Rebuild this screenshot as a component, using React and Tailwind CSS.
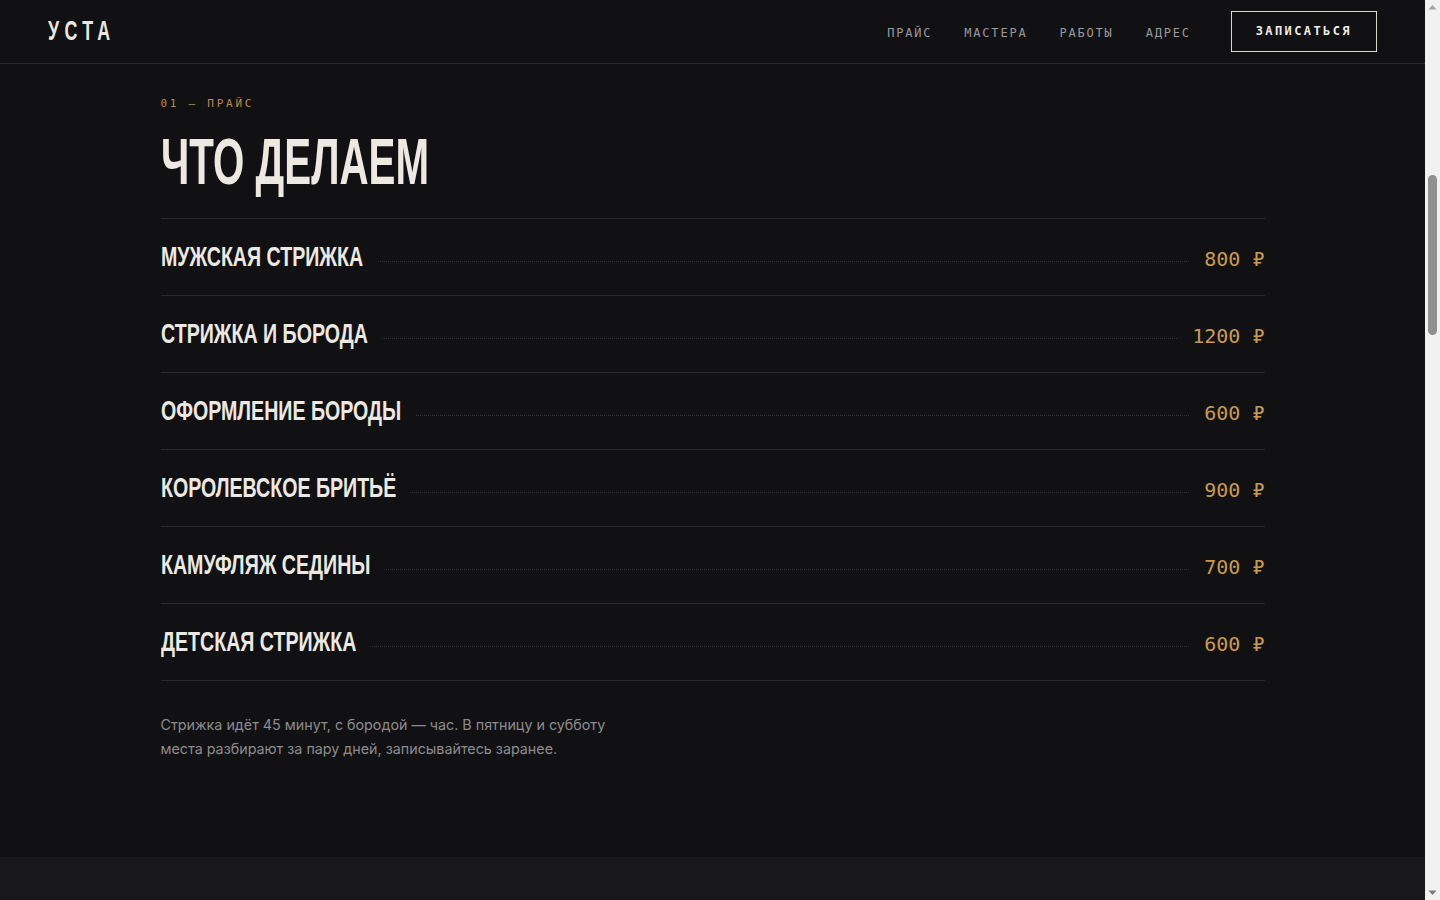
import React from "react";

const services = [
  { name: "Мужская стрижка", price: "800" },
  { name: "Стрижка и борода", price: "1200" },
  { name: "Оформление бороды", price: "600" },
  { name: "Королевское бритьё", price: "900" },
  { name: "Камуфляж седины", price: "700" },
  { name: "Детская стрижка", price: "600" },
];

const navLinks = ["Прайс", "Мастера", "Работы", "Адрес"];

// no condensed face installed, so narrow Arial-metric bold horizontally
const cond = "font-['Liberation_Sans',Arial,sans-serif] font-bold inline-block origin-left";
const mono = "font-['DejaVu_Sans_Mono','Liberation_Mono',monospace]";

function Header() {
  return (
    <header className="sticky top-0 z-10 h-16 bg-[#111113] border-b border-[#2a2a2d]">
      <div className="h-full px-12 flex items-center justify-between">
        <a className={`${cond} scale-x-[0.66] text-[27px] tracking-[0.3em] text-[#ebe7df] uppercase`}>Уста</a>
        <nav className="flex items-center">
          <div className="flex items-center gap-8 mr-10 pt-0.5">
            {navLinks.map((l) => (
              <a key={l} className={`${mono} text-[12px] tracking-[0.15em] uppercase text-[#999999]`}>
                {l}
              </a>
            ))}
          </div>
          <button className={`${mono} font-bold text-[12px] tracking-[0.2em] uppercase text-[#f0ede6] border border-[#d9d6cf] px-6 h-[41px] pb-0.5`}>
            Записаться
          </button>
        </nav>
      </div>
    </header>
  );
}

function PriceRow({ name, price }) {
  return (
    <div className="grid items-center h-[77px] border-b border-[#2a2a2d]">
      <div className="col-start-1 row-start-1 mt-2 border-b border-dotted border-[#323235]" />
      <div className="col-start-1 row-start-1 flex items-center justify-between">
        <span className={`${cond} scale-x-[0.7] text-[28px] uppercase text-[#ece9e2] bg-[#111113] pr-[20px]`}>{name}</span>
        <span className={`${mono} text-[20px] text-[#c99a4b] bg-[#111113] pl-[14px] pt-1`}>{price} ₽</span>
      </div>
    </div>
  );
}

function Scrollbar() {
  return (
    <aside className="sticky top-0 h-screen w-[15px] shrink-0 bg-[#f1f1f1] flex flex-col items-center">
      <svg width="15" height="15" viewBox="0 0 15 15" className="shrink-0">
        <path d="M3.5 9.5 L7.5 5 L11.5 9.5 Z" fill="#a3a3a3" />
      </svg>
      <div className="flex-1 w-full flex justify-center">
        <div className="mt-[160px] w-[9px] h-[160px] rounded-full bg-[#909090]" />
      </div>
      <svg width="15" height="15" viewBox="0 0 15 15" className="shrink-0">
        <path d="M3.5 5.5 L7.5 10 L11.5 5.5 Z" fill="#7a7a7a" />
      </svg>
    </aside>
  );
}

export default function App() {
  return (
    <div className="flex items-start bg-[#111113] min-h-screen">
      <main className="flex-1 min-w-0 font-['Inter',sans-serif]">
        <Header />

        <section className="pt-8 pb-24">
          <div className="max-w-[1200px] mx-auto px-12">
            <div className={`${mono} text-[11px] leading-4 tracking-[0.25em] uppercase text-[#bb8c42]`}>
              01 — Прайс
            </div>
            <h1 className="mt-[18px] mb-[24px] leading-none">
              <span className={`${cond} scale-x-[0.63] text-[64px] leading-none uppercase text-[#ece9e2]`}>Что делаем</span>
            </h1>

            <div className="border-t border-[#2a2a2d]">
              {services.map((s) => (
                <PriceRow key={s.name} {...s} />
              ))}
            </div>

            <p className="mt-8 max-w-[480px] text-[14.3px] leading-6 text-[#8c8c8e]">
              Стрижка идёт 45 минут, с бородой — час. В пятницу и субботу места разбирают за пару дней, записывайтесь заранее.
            </p>
          </div>
        </section>

        <section className="bg-[#18181c] h-[600px]" />
      </main>
      <Scrollbar />
    </div>
  );
}
